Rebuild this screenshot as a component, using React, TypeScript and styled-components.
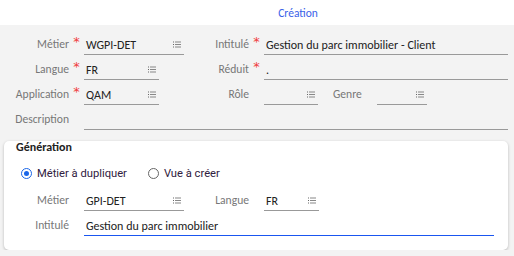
import styled, { createGlobalStyle } from "styled-components"

const GlobalStyle = createGlobalStyle`
	body {
		margin: 0;
		background: #f3f3f3;
		font-family: Carlito, Lato, "Open Sans", sans-serif;
	}
`

const ListIcon = () => (
	<svg width="8" height="7" viewBox="0 0 8 7">
		<rect x="0" y="0.5" width="1" height="1" fill="#666" />
		<rect x="0" y="3" width="1" height="1" fill="#666" />
		<rect x="0" y="5.5" width="1" height="1" fill="#666" />
		<rect x="2" y="0.5" width="6" height="1" fill="#888" />
		<rect x="2" y="3" width="6" height="1" fill="#888" />
		<rect x="2" y="5.5" width="6" height="1" fill="#888" />
	</svg>
)

type FieldProps = {
	label: string
	required?: boolean
	value?: string
	width?: number
	list?: boolean
	focused?: boolean
}

const Field = ({ label, required, value, width, list, focused }: FieldProps) => (
	<>
		<Label>{label}</Label>
		<Star>{required ? "*" : ""}</Star>
		<Input width={width} focused={focused}>
			<span>{value}</span>
			{list && <ListIcon />}
		</Input>
	</>
)

const App = () => {
	return (
		<>
			<GlobalStyle />
			<Header>
				<Title>Création</Title>
			</Header>
			<Body>
				<FormGrid>
					<Field label="Métier" required value="WGPI-DET" width={100} list />
					<Field label="Intitulé" required value="Gestion du parc immobilier - Client" />

					<Field label="Langue" required value="FR" width={75} list />
					<Field label="Réduit" required value="." />

					<Field label="Application" required value="QAM" width={75} list />
					<Label>Rôle</Label>
					<Star />
					<Pair>
						<Input width={54}>
							<span />
							<ListIcon />
						</Input>
						<InlineLabel>Genre</InlineLabel>
						<Input width={50}>
							<span />
							<ListIcon />
						</Input>
					</Pair>

					<Label>Description</Label>
					<Star />
					<Input className="wide" />
				</FormGrid>

				<Card>
					<CardTitle>Génération</CardTitle>
					<RadioRow>
						<Radio>
							<RadioDot checked />
							Métier à dupliquer
						</Radio>
						<Radio>
							<RadioDot />
							Vue à créer
						</Radio>
					</RadioRow>
					<FormGrid>
						<Field label="Métier" value="GPI-DET" width={100} list />
						<Field label="Langue" value="FR" width={55} list />
						<Label>Intitulé</Label>
						<Star />
						<Input className="wide" focused>
							<span>Gestion du parc immobilier</span>
						</Input>
					</FormGrid>
				</Card>
			</Body>
		</>
	)
}

export default App

const Header = styled.header`
	height: 25px;
	background: #fff;
	display: flex;
	justify-content: center;
	align-items: center;
	padding-left: 82px;
`

const Title = styled.h1`
	margin: 0;
	font-size: 11.5px;
	font-weight: normal;
	color: #3a62e8;
`

const Body = styled.main`
	padding: 10px 6px 0 4px;
`

const FormGrid = styled.div`
	display: grid;
	grid-template-columns: 65px 15px 100px 65px 15px 1fr;
	row-gap: 5px;
	align-items: end;

	.wide {
		grid-column: 3 / -1;
	}
`

const Label = styled.label`
	text-align: right;
	font-size: 11.6px;
	color: #777;
	line-height: 16px;
	padding-bottom: 3px;
`

const InlineLabel = styled(Label)`
	width: 44px;
	text-align: left;
	padding-left: 15px;
`

const Star = styled.span`
	color: #f03c3c;
	font-family: "DejaVu Sans", sans-serif;
	font-size: 13px;
	text-align: center;
	line-height: 14px;
	padding-bottom: 6px;
`

const Input = styled.div<{ width?: number; focused?: boolean }>`
	width: ${({ width }) => (width ? `${width}px` : "auto")};
	height: 20px;
	box-sizing: border-box;
	display: flex;
	align-items: center;
	justify-content: space-between;
	padding: 0 3px 0 2px;
	border-bottom: 1px solid ${({ focused }) => (focused ? "#1a56f0" : "#999")};
	font-size: 12px;
	color: #222;
`

const Pair = styled.div`
	grid-column: 6 / -1;
	display: flex;
	align-items: end;
`

const Card = styled.section`
	margin-top: 11px;
	background: #fff;
	border-radius: 5px;
	box-shadow: 0 1px 3px rgba(0, 0, 0, 0.25);
	padding: 0 14px 14px 0;
`

const CardTitle = styled.h2`
	margin: 0 0 0 12px;
	font-size: 12px;
	font-weight: bold;
	color: #222;
	line-height: 12px;
`

const RadioRow = styled.div`
	display: flex;
	gap: 21px;
	padding: 14px 0 12px 17px;
`

const Radio = styled.label`
	display: flex;
	align-items: center;
	gap: 5px;
	height: 12px;
	font-family: Roboto, sans-serif;
	font-size: 11.2px;
	color: #302040;
`

const RadioDot = styled.span<{ checked?: boolean }>`
	width: 11px;
	height: 11px;
	box-sizing: border-box;
	border-radius: 50%;
	border: 1px solid ${({ checked }) => (checked ? "#1a66e8" : "#666")};
	display: flex;
	align-items: center;
	justify-content: center;

	&::after {
		content: "";
		width: 5px;
		height: 5px;
		border-radius: 50%;
		background: ${({ checked }) => (checked ? "#1a66e8" : "transparent")};
	}
`
